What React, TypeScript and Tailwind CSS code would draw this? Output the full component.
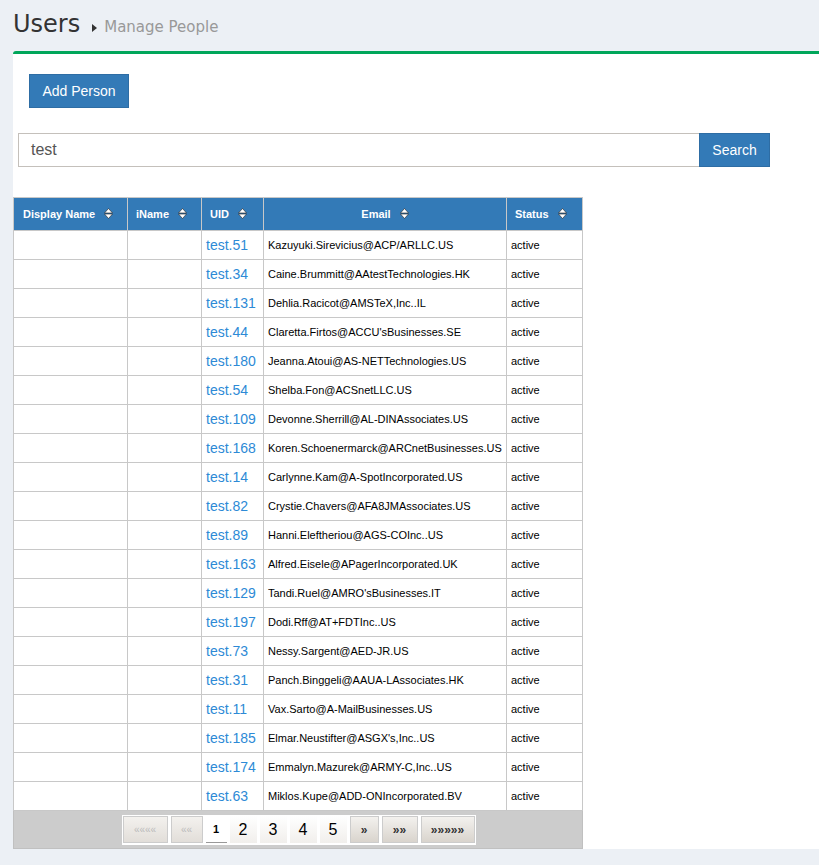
import React from "react";

const rows: [string, string][] = [
  ["test.51", "Kazuyuki.Sirevicius@ACP/ARLLC.US"],
  ["test.34", "Caine.Brummitt@AAtestTechnologies.HK"],
  ["test.131", "Dehlia.Racicot@AMSTeX,Inc..IL"],
  ["test.44", "Claretta.Firtos@ACCU'sBusinesses.SE"],
  ["test.180", "Jeanna.Atoui@AS-NETTechnologies.US"],
  ["test.54", "Shelba.Fon@ACSnetLLC.US"],
  ["test.109", "Devonne.Sherrill@AL-DINAssociates.US"],
  ["test.168", "Koren.Schoenermarck@ARCnetBusinesses.US"],
  ["test.14", "Carlynne.Kam@A-SpotIncorporated.US"],
  ["test.82", "Crystie.Chavers@AFA8JMAssociates.US"],
  ["test.89", "Hanni.Eleftheriou@AGS-COInc..US"],
  ["test.163", "Alfred.Eisele@APagerIncorporated.UK"],
  ["test.129", "Tandi.Ruel@AMRO'sBusinesses.IT"],
  ["test.197", "Dodi.Rff@AT+FDTInc..US"],
  ["test.73", "Nessy.Sargent@AED-JR.US"],
  ["test.31", "Panch.Binggeli@AAUA-LAssociates.HK"],
  ["test.11", "Vax.Sarto@A-MailBusinesses.US"],
  ["test.185", "Elmar.Neustifter@ASGX's,Inc..US"],
  ["test.174", "Emmalyn.Mazurek@ARMY-C,Inc..US"],
  ["test.63", "Miklos.Kupe@ADD-ONIncorporated.BV"],
];

function SortIcon() {
  return (
    <svg width="9" height="11" viewBox="0 0 9 11" className="ml-[9px] inline-block align-[-1px]">
      <path d="M4.5 0.5 L8.5 5 L0.5 5 Z" fill="#fff" stroke="#222" strokeWidth="0.6" />
      <path d="M4.5 10.5 L8.5 6 L0.5 6 Z" fill="#fff" stroke="#222" strokeWidth="0.6" />
    </svg>
  );
}

const th = "border border-[#c8c8c8] px-[8px] text-[11px] font-bold text-white whitespace-nowrap";
const td = "border border-[#c8c8c8] h-[29px] px-[4px] whitespace-nowrap";
const navBtn = "h-[27px] flex items-center justify-center border border-[#ccc] bg-gradient-to-b from-[#f3f1ee] to-[#d9d4cd]";

export default function App() {
  return (
    <div className="min-h-[865px] bg-[#ecf0f5] flex flex-col" style={{ fontFamily: "'Liberation Sans', Arial, sans-serif" }}>
      {/* header */}
      <div className="h-[51px] px-[13px] flex items-end pb-[15px] gap-[12px]">
        <h1 className="text-[24px] leading-none text-[#333] font-['DejaVu_Sans',sans-serif]">Users</h1>
        <span className="flex items-center gap-[7px] text-[15px] leading-none text-[#999] font-['DejaVu_Sans',sans-serif] pb-[1px]">
          <svg width="5" height="8" viewBox="0 0 5 8"><path d="M0 0 L5 4 L0 8 Z" fill="#333" /></svg>
          Manage People
        </span>
      </div>

      {/* box */}
      <div className="ml-[13px] h-[798px] bg-white border-t-[3px] border-[#00a65a] rounded-tl-[3px]">
        <div className="pt-[20px] pl-[16px]">
          <button className="h-[34px] w-[100px] bg-[#337ab7] border border-[#2e6da4] text-white text-[14px]">Add Person</button>
        </div>
        <div className="mt-[25px] ml-[5px] flex">
          <div className="w-[681px] h-[34px] border border-[#c4c0bb] border-r-0 flex items-center px-[12px] text-[16px] text-[#555]">test</div>
          <button className="h-[34px] w-[71px] bg-[#337ab7] border border-[#2e6da4] text-white text-[14px]">Search</button>
        </div>

        <div className="mt-[30px] w-[570px]">
          <table className="border-collapse w-[569px] table-fixed">
            <colgroup>
              <col className="w-[114px]" />
              <col className="w-[74px]" />
              <col className="w-[62px]" />
              <col className="w-[243px]" />
              <col className="w-[76px]" />
            </colgroup>
            <thead>
              <tr className="bg-[#337ab7] h-[33px]">
                <th className={th + " text-left pl-[9px]"}>Display Name<SortIcon /></th>
                <th className={th + " text-left"}>iName<SortIcon /></th>
                <th className={th + " text-left"}>UID<SortIcon /></th>
                <th className={th + " text-center"}>Email<SortIcon /></th>
                <th className={th + " text-left"}>Status<SortIcon /></th>
              </tr>
            </thead>
            <tbody>
              {rows.map(([uid, email]) => (
                <tr key={uid}>
                  <td className={td}></td>
                  <td className={td}></td>
                  <td className={td + " text-[14px] text-[#2d8ad6]"}>{uid}</td>
                  <td className={td + " text-[11px] text-black"}>{email}</td>
                  <td className={td + " text-[11px] text-black"}>active</td>
                </tr>
              ))}
            </tbody>
          </table>
          <div className="h-[38px] bg-[#cccccc] border border-t-0 border-[#c0c0c0] flex items-center justify-center pl-[1px]">
            <div className="bg-white h-[30px] flex items-center gap-[3px] px-[1px]">
              <span className={navBtn + " w-[45px] text-[10px] text-[#bbb] font-normal from-[#f3f1ee] to-[#e2ded9]"}>««««</span>
              <span className={navBtn + " w-[32px] text-[10px] text-[#bbb] font-normal from-[#f3f1ee] to-[#e2ded9]"}>««</span>
              <span className="h-[27px] w-[21px] flex items-center justify-center border-b border-[#999] text-[11px] font-bold text-black">1</span>
              {["2", "3", "4", "5"].map((n) => (
                <span key={n} className="h-[27px] w-[27px] flex items-center justify-center bg-gradient-to-b from-white to-[#f1efec] text-[16px] text-black">{n}</span>
              ))}
              <span className={navBtn + " w-[29px] text-[12px] font-bold text-[#333]"}>»</span>
              <span className={navBtn + " w-[36px] text-[12px] font-bold text-[#333]"}>»»</span>
              <span className={navBtn + " w-[54px] text-[12px] font-bold text-[#333]"}>»»»»»</span>
            </div>
          </div>
        </div>
      </div>
    </div>
  );
}
